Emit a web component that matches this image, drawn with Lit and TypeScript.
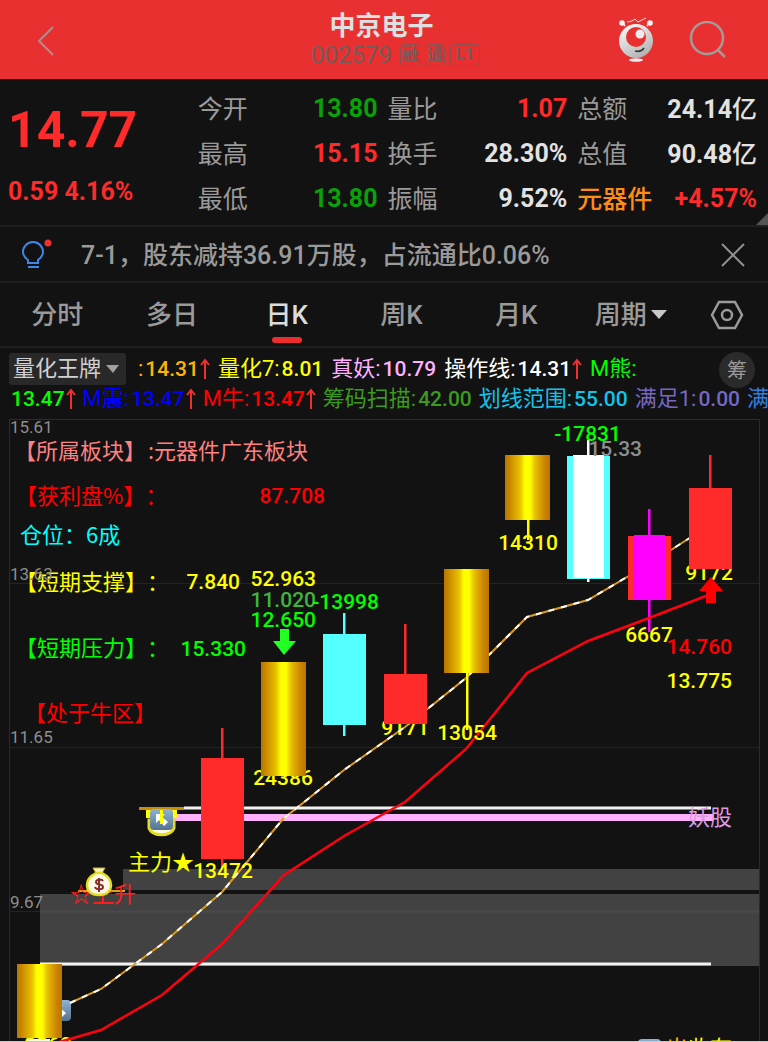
import { LitElement, html, svg, css } from "lit";
import { customElement, state } from "lit/decorators.js";

interface Quote { label: string; value: string; tone: string; hot?: boolean; }
interface Metric { name: string; value: string; color: string; up?: boolean; }
interface Mark { x: number; y: number; text: string; color: string; size?: "axis" | "cjk"; anchor?: string; }
interface Candle { kind: "gold" | "red" | "cyan" | "white" | "magenta"; x: number; top: number; bottom: number; high?: number; low?: number; }

const QUOTES: Quote[][] = [
  [
    { label: "今开", value: "13.80", tone: "down" },
    { label: "最高", value: "15.15", tone: "up" },
    { label: "最低", value: "13.80", tone: "down" },
  ],
  [
    { label: "量比", value: "1.07", tone: "up" },
    { label: "换手", value: "28.30%", tone: "flat" },
    { label: "振幅", value: "9.52%", tone: "flat" },
  ],
  [
    { label: "总额", value: "24.14亿", tone: "flat" },
    { label: "总值", value: "90.48亿", tone: "flat" },
    { label: "元器件", value: "+4.57%", tone: "up", hot: true },
  ],
];

const TABS = ["分时", "多日", "日K", "周K", "月K"];

const METRICS_A: Metric[] = [
  { name: ":", value: "14.31", color: "#ffb400", up: true },
  { name: "量化7:", value: "8.01", color: "#ffff00" },
  { name: "真妖:", value: "10.79", color: "#ffb0ff" },
  { name: "操作线:", value: "14.31", color: "#ffffff", up: true },
  { name: "M熊:", value: "", color: "#00ff00" },
];
const METRICS_B: Metric[] = [
  { name: "", value: "13.47", color: "#00ff00", up: true },
  { name: "M震:", value: "13.47", color: "#0000ff", up: true },
  { name: "M牛:", value: "13.47", color: "#ff0000", up: true },
  { name: "筹码扫描:", value: "42.00", color: "#3c9a20" },
  { name: "划线范围:", value: "55.00", color: "#12c4e8" },
  { name: "满足1:", value: "0.00", color: "#7468c4" },
  { name: "满足2:", value: "0.00", color: "#2f7fe0" },
];

const CANDLES: Candle[] = [
  { kind: "gold", x: 40, top: 964, bottom: 1038 },
  { kind: "red", x: 222, top: 758, bottom: 859, high: 728, low: 870 },
  { kind: "gold", x: 284, top: 662, bottom: 776 },
  { kind: "cyan", x: 344, top: 634, bottom: 725, high: 613, low: 736 },
  { kind: "red", x: 405, top: 674, bottom: 724, high: 624 },
  { kind: "gold", x: 467, top: 569, bottom: 673, low: 730 },
  { kind: "gold", x: 528, top: 455, bottom: 520, low: 540 },
  { kind: "white", x: 588, top: 456, bottom: 579, high: 440, low: 582 },
  { kind: "magenta", x: 649, top: 536, bottom: 600, high: 509, low: 632 },
  { kind: "red", x: 710, top: 488, bottom: 569, high: 455 },
];

const YELLOW = "#ffff00";
const GREEN = "#00ff00";
const RED = "#ff0000";
const GRAY = "#8e8e8e";

/* Labels that the candles cover. */
const BACK_MARKS: Mark[] = [
  { x: 283, y: 785, text: "24386", color: YELLOW, anchor: "middle" },
  { x: 405, y: 735, text: "9171", color: YELLOW, anchor: "middle" },
  { x: 709, y: 580, text: "9172", color: YELLOW, anchor: "middle" },
  { x: 48, y: 1052, text: "9262", color: YELLOW, anchor: "middle" },
];

const MARKS: Mark[] = [
  { x: 14, y: 459, text: "【所属板块】", color: "#ff8080", size: "cjk" },
  { x: 148, y: 459, text: ":元器件广东板块", color: "#ff8080", size: "cjk" },
  { x: 15, y: 504, text: "【获利盘%】：", color: RED, size: "cjk" },
  { x: 325, y: 503, text: "87.708", color: RED, anchor: "end" },
  { x: 20, y: 543, text: "仓位：6成", color: "#00ffff", size: "cjk" },
  { x: 15, y: 590, text: "【短期支撑】：", color: YELLOW, size: "cjk" },
  { x: 240, y: 589, text: "7.840", color: YELLOW, anchor: "end" },
  { x: 316, y: 586, text: "52.963", color: YELLOW, anchor: "end" },
  { x: 316, y: 607, text: "11.020", color: "#3fb540", anchor: "end" },
  { x: 316, y: 627, text: "12.650", color: GREEN, anchor: "end" },
  { x: 379, y: 609, text: "-13998", color: GREEN, anchor: "end" },
  { x: 15, y: 656, text: "【短期压力】：", color: GREEN, size: "cjk" },
  { x: 246, y: 656, text: "15.330", color: GREEN, anchor: "end" },
  { x: 24, y: 721, text: "【处于牛区】", color: RED, size: "cjk" },
  { x: 621, y: 441, text: "-17831", color: GREEN, anchor: "end" },
  { x: 642, y: 456, text: "15.33", color: GRAY, anchor: "end" },
  { x: 528, y: 550, text: "14310", color: YELLOW, anchor: "middle" },
  { x: 467, y: 740, text: "13054", color: YELLOW, anchor: "middle" },
  { x: 649, y: 642, text: "6667", color: YELLOW, anchor: "middle" },
  { x: 732, y: 654, text: "14.760", color: RED, anchor: "end" },
  { x: 732, y: 688, text: "13.775", color: YELLOW, anchor: "end" },
  { x: 223, y: 878, text: "13472", color: YELLOW, anchor: "middle" },
  { x: 128, y: 870, text: "主力★", color: YELLOW, size: "cjk" },
  { x: 688, y: 825, text: "妖股", color: "#dc9ae0", size: "cjk" },
];

const AXIS: Mark[] = [
  { x: 10, y: 433, text: "15.61", color: GRAY, size: "axis" },
  { x: 10, y: 580, text: "13.63", color: GRAY, size: "axis" },
  { x: 10, y: 743, text: "11.65", color: GRAY, size: "axis" },
  { x: 10, y: 908, text: "9.67", color: GRAY, size: "axis" },
];

const COST_LINE = "70,1003 101,989 162,944 222,892 283,819 344,770 405,727 466,678 527,617 588,600 649,564 710,525";
const TREND_LINE = "56,1043 101,1030 162,995 222,944 284,875 344,836 405,802 466,749 527,673 588,641 649,618 711,594";

@customElement("k-chart")
export class KChart extends LitElement {
  static styles = css`
    :host { display: block; }
    svg { display: block; width: 100%; height: auto; overflow: hidden; }
    .num { font: 500 21px Roboto, "Noto Sans CJK SC", sans-serif; }
    .axis { font: 400 17px Roboto, sans-serif; }
    .cjk { font: 400 22px "Noto Sans CJK SC", sans-serif; text-spacing-trim: space-all; }
  `;

  private mark(m: Mark) {
    return svg`<text class=${m.size ?? "num"} x=${m.x} y=${m.y} fill=${m.color} text-anchor=${m.anchor ?? "start"}>${m.text}</text>`;
  }

  private candle(c: Candle) {
    const h = c.bottom - c.top;
    const high = c.high ?? c.top;
    const low = c.low ?? c.bottom;
    const colors = { gold: "#ffff00", red: "#ff2a2a", cyan: "#54ffff", white: "#ffffff", magenta: "#ff00ff" };
    const wick = svg`<rect x=${c.x - 1} y=${high} width="2.500" height=${low - high} fill=${colors[c.kind]} />`;
    switch (c.kind) {
      case "gold":
        return svg`${wick}<rect x=${c.x - 23} y=${c.top} width="45" height=${h} fill="url(#gold)" />`;
      case "white":
        return svg`<rect x=${c.x - 21} y=${c.top} width="43" height=${h} fill="#54ffff" />${wick}<rect x=${c.x - 15} y=${c.top - 1} width="31" height=${h} fill="#fff" />`;
      case "magenta":
        return svg`<rect x=${c.x - 21} y=${c.top} width="43" height=${h} fill="#ff2a2a" />${wick}<rect x=${c.x - 15} y=${c.top - 1} width="31" height=${h} fill="#f0f" />`;
      default:
        return svg`${wick}<rect x=${c.x - 21} y=${c.top} width="43" height=${h} fill=${colors[c.kind]} />`;
    }
  }

  private badge(x: number, y: number) {
    return svg`<g transform="translate(${x} ${y})">
      <rect width="23" height="21" rx="4" fill="url(#badge)" />
      <path d="M6 5h9l-3 3 6 5-4 4-5-6-3 3z" fill="#fff" />
    </g>`;
  }

  private moneyBag(x: number, y: number) {
    return svg`<g transform="translate(${x} ${y})">
      <path d="M-6 -14h12l-3 5h-6z" fill="#f4f0c8" stroke="#c9b41c" stroke-width="1" />
      <path d="M-3 -9h6c6 3 9 7 9 12 0 6-4 10-12 10s-12-4-12-10c0-5 3-9 9-12z" fill="#fffbe8" stroke="#e6dc1e" stroke-width="2.5" />
      <path d="M4 -1c-1-2-7-2-7 1 0 4 7 1 7 5 0 3-7 3-8 0M0 -4v14" fill="none" stroke="#8a2b2b" stroke-width="2" />
    </g>`;
  }

  render() {
    return html`<svg viewBox="0 418 768 624" role="img" aria-label="日K线图">
      <defs>
        <linearGradient id="gold">
          <stop offset="0" stop-color="#b87400" />
          <stop offset="0.12" stop-color="#cc8c00" />
          <stop offset="0.34" stop-color="#e8c400" />
          <stop offset="0.44" stop-color="#ffff00" />
          <stop offset="0.56" stop-color="#ffff00" />
          <stop offset="0.66" stop-color="#e8c400" />
          <stop offset="0.88" stop-color="#cc8400" />
          <stop offset="1" stop-color="#b87400" />
        </linearGradient>
        <linearGradient id="badge" x2="0" y2="1">
          <stop offset="0" stop-color="#8fb4d4" />
          <stop offset="1" stop-color="#54748e" />
        </linearGradient>
      </defs>

      <path d="M123 869H759V890H123zM40 894H759V966H40z" fill="#424242" />
      <path d="M9.500 1042V419.500H759.500V1042" fill="none" stroke="#2b2b2b" />
      <path d="M9 583.500H759M9 747.500H759" stroke="#232323" />
      <path d="M9 911.500H40" stroke="#232323" />
      <path d="M40 911.500H759" stroke="#4a4a4a" stroke-width="2" />
      <path d="M184 808H711M40 964H711" stroke="#f2f2f2" stroke-width="3" />
      <path d="M172 817.500H714" stroke="#ffb0ff" stroke-width="7" />

      ${BACK_MARKS.map((m) => this.mark(m))}
      ${this.badge(48, 1000)}
      <polyline points=${COST_LINE} fill="none" stroke="#dc9c1e" stroke-width="2" />
      <polyline points=${COST_LINE} fill="none" stroke="#fff" stroke-width="2" stroke-dasharray="6 7" />
      ${CANDLES.map((c) => this.candle(c))}

      <path d="M280 629h9v12h7l-12 14-11-14h7z" fill="#22ff22" />
      <path d="M711 577l12 14h-7v12h-10v-12h-7z" fill="#ff0000" />
      <polyline points=${TREND_LINE} fill="none" stroke="#ff0010" stroke-width="2.5" />

      <path d="M139 808.500H184" stroke="#c88c10" stroke-width="3" />
      <path d="M146 810h31v8h-31z" fill="#ffff00" />
      <path d="M149 820h25v8c-3 9-22 9-25 0z" fill="#fffbe8" stroke="#e6dc1e" stroke-width="3" />
      ${this.badge(150, 809)}
      <path d="M161.500 810V824" stroke="#ffff00" stroke-width="3" />
      <path d="M78 891H125" stroke="#e0a010" stroke-width="2" />
      <text class="cjk" x="70" y="902" fill="#ff2020">☆上升</text>
      ${this.moneyBag(99, 882)}
      <path d="M27 1039h23v5h-23z" fill="#fffbe8" />
      ${this.badge(638, 1039)}
      <text class="cjk" x="666" y="1056" fill="#ffb400">出<tspan fill="#ffff00">收存</tspan></text>

      ${MARKS.map((m) => this.mark(m))}
      ${AXIS.map((m) => this.mark(m))}
      <path d="M0 1041.500H768" stroke="#c8c8c8" />
    </svg>`;
  }
}

@customElement("app-root")
export class AppRoot extends LitElement {
  @state() private tab = "日K";

  static styles = css`
    :host {
      display: block;
      overflow: hidden;
      background: #121212;
      color: #9a9a9a;
      font-family: Roboto, "Noto Sans CJK SC", sans-serif;
    }
    * { box-sizing: border-box; }
    button, select { padding: 0; border: 0; background: none; color: inherit; font: inherit; cursor: pointer; }
    svg { display: block; }

    .top { display: grid; grid-template-columns: 1fr auto 1fr; align-items: center; height: 79px; padding: 0 41px 0 36px; background: #e83030; }
    .back { justify-self: start; }
    .name { display: grid; justify-items: center; padding-bottom: 2px; }
    .title { margin: 0; color: #e0e0e0; font: 700 26px/32px "Noto Sans CJK SC", sans-serif; }
    .code { display: flex; align-items: center; gap: 5px; padding-left: 28px; color: #745c5c; font-size: 24px; line-height: 30px; }
    .tag { height: 22px; padding: 0 1px; border: 1px solid #8c5050; border-radius: 4px; font-size: 16px; font-weight: 700; line-height: 20px; }
    .tag.wide { padding: 0 5px; }
    .tag.first { margin-left: 3px; }
    .tools { display: flex; justify-self: end; align-items: center; gap: 34px; }

    .quote { position: relative; display: grid; grid-template-columns: repeat(4, 1fr); gap: 10px; height: 148px; padding: 7px 11px 4px 8px; border-bottom: 2px solid #1f1f1f; }
    .last { display: flex; flex-direction: column; color: #ff2a2a; font-weight: 700; }
    .price { font-size: 50px; line-height: 88px; }
    .change { font-size: 25px; line-height: 36px; }
    .facts { display: grid; grid-auto-rows: 1fr; margin: 0; }
    .fact { display: flex; justify-content: space-between; align-items: center; }
    .fact dt { padding-bottom: 3px; font: 400 25px/36px "Noto Sans CJK SC", sans-serif; }
    .fact dt.hot { color: #ff8c14; font-weight: 500; }
    .fact dd { margin: 0; font: 700 25px/36px Roboto, "Noto Sans CJK SC", sans-serif; }
    .unit { font: 500 25px/36px "Noto Sans CJK SC", sans-serif; }
    .up { color: #ff2a2a; }
    .down { color: #0aa00a; }
    .flat { color: #e2e2e2; }
    .corner { position: absolute; right: 0; bottom: 0; }

    .notice { display: flex; align-items: center; gap: 28px; height: 56px; padding: 2px 23px 0 21px; border-bottom: 2px solid #1f1f1f; }
    .notice p { flex: 1; margin: 0; padding-top: 2px; font: 500 25px/36px Roboto, "Noto Sans CJK SC", sans-serif; white-space: nowrap; }

    .tabs { display: grid; grid-template-columns: repeat(6, 115fr) 78fr; height: 65px; padding-right: 2px; border-bottom: 2px solid #1f1f1f; }
    .tab { position: relative; display: flex; justify-content: center; align-items: center; gap: 4px; font: 500 26px/36px Roboto, "Noto Sans CJK SC", sans-serif; }
    .tab.on { color: #dcdcdc; }
    .tab.on::after { content: ""; position: absolute; bottom: 3px; width: 30px; height: 6px; border-radius: 3px; background: #ee2c2c; }

    .metrics { position: relative; height: 70px; padding: 6px 0 0 9px; font-size: 21px; font-weight: 500; white-space: nowrap; }
    .line { display: flex; align-items: center; gap: 8px; height: 30px; line-height: 30px; }
    .second { gap: 7px; padding-left: 2px; }
    .metric { display: flex; align-items: center; }
    .metric b { font: 400 22px/30px Roboto, "Noto Sans CJK SC", sans-serif; }
    .metric b:not(:empty) { margin-right: 2px; }
    .pick { position: relative; display: flex; align-items: center; width: 117px; height: 32px; margin-right: 4px; }
    .pick select { width: 100%; height: 32px; padding: 0 0 5px 4px; border-radius: 3px; background: #282828; color: #d0d0d0; font: 400 22px/27px "Noto Sans CJK SC", sans-serif; appearance: none; }
    .pick svg { position: absolute; right: 7px; pointer-events: none; }
    .chips { position: absolute; top: 4px; right: 13px; width: 36px; height: 36px; border-radius: 50%; background: #2a2a2a; font: 400 20px/36px "Noto Sans CJK SC", sans-serif; }
  `;

  private metric(m: Metric) {
    return html`<span class="metric" style="color:${m.color}"><b>${m.name}</b>${m.value}${m.up
      ? html`<svg width="11" height="22" viewBox="0 0 11 22" fill="none" stroke="#f03030" stroke-width="2"><path d="M6 21V2M2 7l4-5 4 5" /></svg>`
      : ""}</span>`;
  }

  private value(text: string) {
    return text.endsWith("亿") ? html`${text.slice(0, -1)}<span class="unit">亿</span>` : text;
  }

  render() {
    return html`
      <header class="top">
        <button class="back" aria-label="返回">
          <svg width="20" height="32" viewBox="0 0 20 32" fill="none" stroke="#b08c8c" stroke-width="2"><path d="M17 3L3 17l14 14" /></svg>
        </button>
        <div class="name">
          <h1 class="title">中京电子</h1>
          <div class="code">002579<span class="tag first">融</span><span class="tag">通</span><span class="tag wide">L1</span></div>
        </div>
        <div class="tools">
          <button aria-label="智能助手">
            <svg width="38" height="46" viewBox="0 0 38 46">
              <defs><linearGradient id="ball" x2="0.600" y2="1"><stop offset="0" stop-color="#fff" /><stop offset="1" stop-color="#b4b4b4" /></linearGradient></defs>
              <path d="M8 9L5 5M30 9l3-4" stroke="#eee" stroke-width="1.500" />
              <circle cx="5" cy="6" r="2.800" fill="#f4f4f4" /><circle cx="33" cy="6" r="2.800" fill="#f4f4f4" />
              <path d="M10 5l5-1 3-2 3 3 8-4" fill="none" stroke="#f4dada" stroke-width="1" />
              <circle cx="19" cy="24" r="17" fill="url(#ball)" />
              <circle cx="19" cy="20" r="10" fill="#e83030" />
              <circle cx="23" cy="17" r="4.500" fill="#ececec" />
              <path d="M18 34c4 1 7 0 9-3" fill="none" stroke="#333" stroke-width="1.500" />
              <ellipse cx="19" cy="43" rx="7" ry="1.800" fill="#ececec" />
            </svg>
          </button>
          <button aria-label="搜索">
            <svg width="38" height="38" viewBox="0 0 38 38" fill="none" stroke="#a39a9a" stroke-width="2.500"><circle cx="18" cy="17" r="16" /><path d="M28 28l8 8" /></svg>
          </button>
        </div>
      </header>

      <section class="quote">
        <div class="last"><span class="price">14.77</span><span class="change">0.59 4.16%</span></div>
        ${QUOTES.map((column) => html`<dl class="facts">${column.map((q) => html`
          <div class="fact"><dt class=${q.hot ? "hot" : ""}>${q.label}</dt><dd class=${q.tone}>${this.value(q.value)}</dd></div>`)}</dl>`)}
        <svg class="corner" width="12" height="12" viewBox="0 0 12 12"><path d="M12 0v12H0z" fill="#555" /></svg>
      </section>

      <section class="notice">
        <svg width="32" height="32" viewBox="0 0 32 32" fill="none" stroke="#3f86e8" stroke-width="2">
          <path d="M7 24v-3C3 18 2 15 2 13a10 10 0 0 1 20 0c0 2-1 5-5 8v3z" /><path d="M7 28h11" />
          <circle cx="27" cy="4" r="3.500" fill="#f03030" stroke="none" />
        </svg>
        <p>7-1，股东减持36.91万股，占流通比0.06%</p>
        <button aria-label="关闭"><svg width="24" height="24" viewBox="0 0 24 24" stroke="#909090" stroke-width="2"><path d="M1 1l22 22M23 1L1 23" /></svg></button>
      </section>

      <nav class="tabs">
        ${TABS.map((t) => html`<button class="tab ${this.tab === t ? "on" : ""}" @click=${() => (this.tab = t)}>${t}</button>`)}
        <button class="tab">周期<svg width="16" height="9" viewBox="0 0 16 9"><path d="M0 0h16L8 9z" fill="#c8c8c8" /></svg></button>
        <button class="tab" aria-label="设置">
          <svg width="34" height="30" viewBox="0 0 34 30" fill="none" stroke="#9a9a9a" stroke-width="2.500"><path d="M9 2h16l7 13-7 13H9L2 15z" /><circle cx="17" cy="15" r="5" /></svg>
        </button>
      </nav>

      <section class="metrics">
        <div class="line">
          <label class="pick">
            <select aria-label="指标"><option>量化王牌</option></select>
            <svg width="13" height="8" viewBox="0 0 13 8"><path d="M0 0h13L7 8z" fill="#a0a0a0" /></svg>
          </label>
          ${METRICS_A.map((m) => this.metric(m))}
        </div>
        <div class="line second">${METRICS_B.map((m) => this.metric(m))}</div>
        <button class="chips">筹</button>
      </section>

      <k-chart></k-chart>
    `;
  }
}
